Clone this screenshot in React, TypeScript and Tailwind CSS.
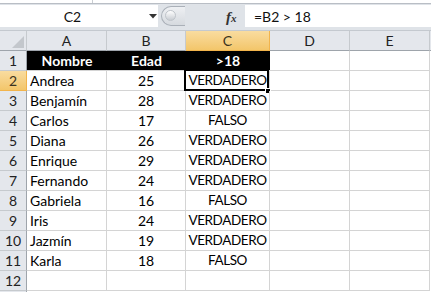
import React from "react";

const cols = [
  { key: "A", w: "w-[80px]" },
  { key: "B", w: "w-[79px]" },
  { key: "C", w: "w-[84px]" },
  { key: "D", w: "w-[80px]" },
  { key: "E", w: "w-[80px]" },
];

const data: [string, string, string][] = [
  ["Andrea", "25", "VERDADERO"],
  ["Benjamín", "28", "VERDADERO"],
  ["Carlos", "17", "FALSO"],
  ["Diana", "26", "VERDADERO"],
  ["Enrique", "29", "VERDADERO"],
  ["Fernando", "24", "VERDADERO"],
  ["Gabriela", "16", "FALSO"],
  ["Iris", "24", "VERDADERO"],
  ["Jazmín", "19", "VERDADERO"],
  ["Karla", "18", "FALSO"],
];

function RowHeader({ n, selected }: { n?: number; selected?: boolean }) {
  return (
    <div
      className={
        "w-[27px] h-[20px] shrink-0 flex items-center justify-center border-r border-b text-[14px] " +
        (selected
          ? "bg-gradient-to-b from-[#f9dc9f] to-[#f3c66a] border-r-[#f2b44c] border-b-[#f2b44c] text-[#3b3320]"
          : "bg-[#e4e7ec] border-r-[#9ea4ab] border-b-[#c6cace] text-[#222]")
      }
    >
      {n}
    </div>
  );
}

export default function App() {
  return (
    <div
      className="w-[431px] h-[292px] overflow-hidden bg-white relative"
      style={{ fontFamily: "Lato, 'Liberation Sans', sans-serif" }}
    >
      {/* top strip */}
      <div className="h-[4px] bg-white border-b border-[#b9bec5] flex">
        <div className="w-[93px] border-r border-[#c9cdd2] h-[3px]" />
      </div>
      {/* formula bar */}
      <div className="h-[27px] bg-[#dfe3e8] flex items-start border-b border-[#c4c9cf]">
        <div className="w-[158px] h-[22px] mt-[1px] bg-white flex items-center relative">
          <span className="w-[145px] text-center text-[14px] text-[#111]">C2</span>
          <svg width="8" height="5" viewBox="0 0 8 5" className="absolute left-[149px] top-[9px]">
            <polygon points="0,0 8,0 4,4.5" fill="#333" />
          </svg>
        </div>
        <div className="relative w-[87px] h-[22px] mt-[1px]">
          <div className="absolute left-[3px] top-[1px] w-[24px] h-[20px] rounded-l-full border border-[#aab0b8] bg-gradient-to-b from-[#eef0f3] to-[#d6dadf] border-r-0" />
          <div className="absolute left-[7px] top-[5px] w-[11px] h-[11px] rounded-full bg-gradient-to-b from-[#ffffff] to-[#c9cdd3] border border-[#bfc4ca]" />
          <span
            className="absolute left-[68px] top-[1px] text-[15px] italic text-[#333] font-semibold"
            style={{ fontFamily: "'Liberation Serif', serif" }}
          >
            f<span className="text-[11px]">x</span>
          </span>
        </div>
        <div className="flex-1 h-[22px] mt-[1px] bg-white flex items-center pl-[9px] text-[14px] text-[#111]">
          =B2 &gt; 18
        </div>
      </div>
      {/* column header row */}
      <div className="flex">
        <div className="w-[27px] h-[20px] shrink-0 bg-[#e4e7ec] border-r border-b border-r-[#c6cace] border-b-[#9ea4ab] relative">
          <svg width="12" height="12" viewBox="0 0 12 12" className="absolute right-[2px] bottom-[2px]">
            <polygon points="12,0 12,12 0,12" fill="#c3c7cc" />
          </svg>
        </div>
        {cols.map((c) => (
          <div
            key={c.key}
            className={
              c.w +
              " h-[20px] shrink-0 flex items-center justify-center border-r border-b text-[14px] " +
              (c.key === "C"
                ? "bg-gradient-to-b from-[#f9dc9f] to-[#f3c66a] border-r-[#f2b44c] border-b-[#f2b44c] text-[#3b3320]"
                : "bg-[#e4e7ec] border-r-[#c6cace] border-b-[#9ea4ab] text-[#222]")
            }
          >
            {c.key}
          </div>
        ))}
        <div className="flex-1 h-[20px] bg-[#e4e7ec] border-b border-[#9ea4ab]" />
      </div>
      {/* row 1 */}
      <div className="flex">
        <RowHeader n={1} />
        <div className="w-[80px] h-[20px] shrink-0 bg-black text-white font-bold text-[14px] flex items-center justify-center border-b border-[#d4d4d4]">
          Nombre
        </div>
        <div className="w-[79px] h-[20px] shrink-0 bg-black text-white font-bold text-[14px] flex items-center justify-center border-b border-[#d4d4d4]">
          Edad
        </div>
        <div className="w-[84px] h-[20px] shrink-0 bg-black text-white font-bold text-[14px] flex items-center justify-center border-b border-[#d4d4d4]">
          &gt;18
        </div>
        <div className="w-[80px] h-[20px] shrink-0 border-r border-b border-[#d4d4d4]" />
        <div className="w-[80px] h-[20px] shrink-0 border-r border-b border-[#d4d4d4]" />
      </div>
      {data.map((r, i) => (
        <div key={i} className="flex">
          <RowHeader n={i + 2} selected={i === 0} />
          <div className="w-[80px] h-[20px] shrink-0 border-r border-b border-[#d4d4d4] text-[14px] text-black flex items-center pl-[3px]">
            {r[0]}
          </div>
          <div className="w-[79px] h-[20px] shrink-0 border-r border-b border-[#d4d4d4] text-[14px] text-black flex items-center justify-center">
            {r[1]}
          </div>
          <div className="w-[84px] h-[20px] shrink-0 border-r border-b border-[#d4d4d4] text-[13.5px] tracking-[-0.4px] text-black flex items-center justify-center relative">
            {r[2]}
            {i === 0 && (
              <>
                <div className="absolute left-[-2px] top-[-2px] w-[85px] h-[22px] border-2 border-black" />
                <div className="absolute left-[79px] top-[17px] w-[6px] h-[6px] bg-black border border-white" />
              </>
            )}
          </div>
          <div className="w-[80px] h-[20px] shrink-0 border-r border-b border-[#d4d4d4]" />
          <div className="w-[80px] h-[20px] shrink-0 border-r border-b border-[#d4d4d4]" />
        </div>
      ))}
      <div className="flex">
        <RowHeader n={12} />
        <div className="w-[80px] h-[20px] shrink-0 border-r border-b border-[#d4d4d4]" />
        <div className="w-[79px] h-[20px] shrink-0 border-r border-b border-[#d4d4d4]" />
        <div className="w-[84px] h-[20px] shrink-0 border-r border-b border-[#d4d4d4]" />
        <div className="w-[80px] h-[20px] shrink-0 border-r border-b border-[#d4d4d4]" />
        <div className="w-[80px] h-[20px] shrink-0 border-r border-b border-[#d4d4d4]" />
      </div>
      <div className="flex">
        <RowHeader />
      </div>
    </div>
  );
}
